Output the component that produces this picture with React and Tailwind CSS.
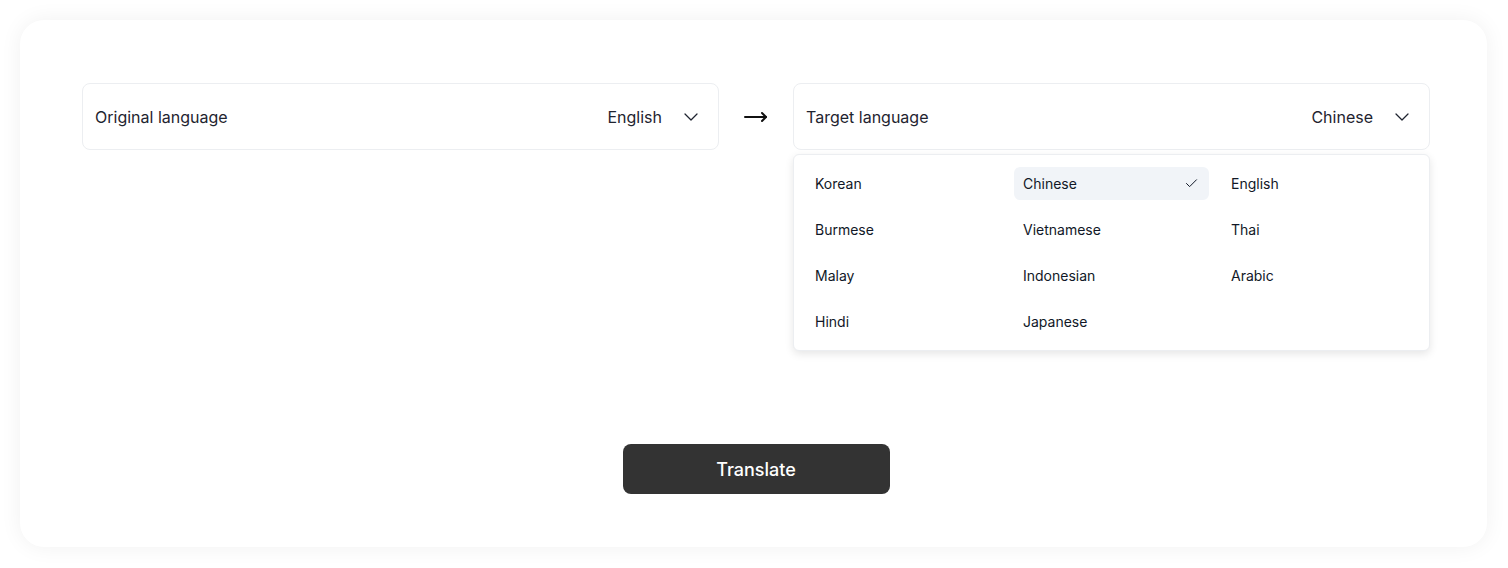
import { ChevronDown, Check } from "lucide-react";

const languages = [
  "Korean", "Chinese", "English",
  "Burmese", "Vietnamese", "Thai",
  "Malay", "Indonesian", "Arabic",
  "Hindi", "Japanese",
];

function Select({ label, value, children }) {
  return (
    <div className="relative flex-1">
      <div className="h-[67px] flex items-center justify-between pl-[12px] pr-[15px] border border-[#eceef1] rounded-lg bg-white">
        <span className="text-[16px] text-[#1f2430]">{label}</span>
        <div className="flex items-center gap-[17px]">
          <span className="text-[16px] text-[#1f2430]">{value}</span>
          <ChevronDown size={24} strokeWidth={1.25} className="text-[#1f2430]" />
        </div>
      </div>
      {children}
    </div>
  );
}

export default function App() {
  const selected = "Chinese";

  return (
    <div className="w-[1508px] h-[568px] bg-white p-5" style={{ fontFamily: "Inter, 'Noto Sans', sans-serif" }}>
      <div className="h-[527px] w-[1467px] bg-white rounded-3xl shadow-[0_0_22px_rgba(0,0,0,0.06)] pl-[62px] pr-[57px] pt-[63px] flex flex-col">

        {/* Language pickers */}
        <div className="flex items-center gap-[25px]">
          <Select label="Original language" value="English" />

          <svg width="24" height="24" viewBox="0 0 24 24" fill="none" stroke="#111" strokeWidth="2" strokeLinecap="round" strokeLinejoin="round" className="shrink-0">
            <path d="M1 12h21" />
            <path d="M18 8l4 4-4 4" />
          </svg>

          <Select label="Target language" value={selected}>
            <div className="absolute left-0 right-0 top-[71px] z-10 bg-white border border-[#eceef1] rounded-md shadow-[0_3px_8px_rgba(0,0,0,0.1)] p-3">
              <div className="grid grid-cols-3 gap-[13px]">
                {languages.map(lang => (
                  <div
                    key={lang}
                    className={`h-[33px] flex items-center justify-between pl-[9px] pr-[10px] rounded-md text-[14px] text-[#111827] ${lang === selected ? "bg-[#f1f4f8]" : ""}`}
                  >
                    <span>{lang}</span>
                    {lang === selected && <Check size={15} strokeWidth={1.6} />}
                  </div>
                ))}
              </div>
            </div>
          </Select>
        </div>

        {/* Translate button */}
        <div className="mt-[294px] flex justify-center">
          <button className="w-[267px] h-[50px] rounded-lg bg-[#333333] text-white text-[18px] font-medium">
            Translate
          </button>
        </div>
      </div>
    </div>
  );
}
